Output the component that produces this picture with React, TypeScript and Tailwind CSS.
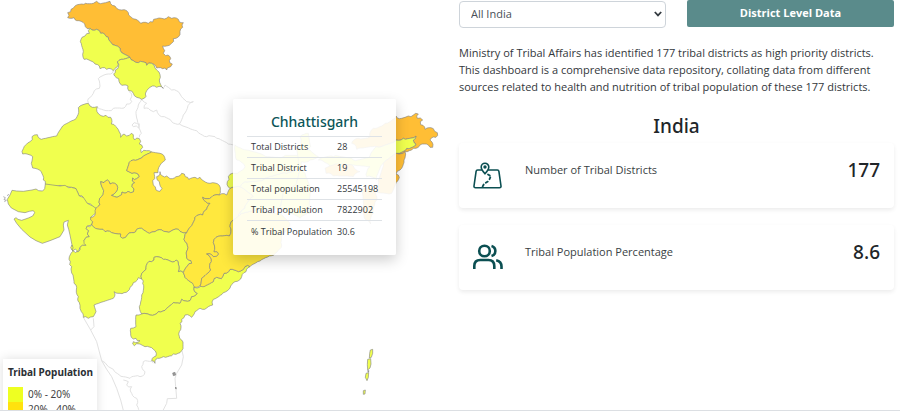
import React from "react";

type Point = [number, number];

const LIME = "#f0ff4e";
const YELLOW = "#ffe83e";
const ORANGE = "#ffbe35";

const parse = (source: string): Point[] =>
  source
    .trim()
    .split(/\s+/)
    .map((pair) => pair.split(",").map(Number) as Point);

// Breaks long borders into small irregular steps. The offsets depend only on
// an edge's two ends, so neighbouring states keep a common border.
function roughen(a: Point, b: Point): Point[] {
  const flip = a[0] > b[0] || (a[0] === b[0] && a[1] > b[1]);
  const [p, q] = flip ? [b, a] : [a, b];
  const dx = q[0] - p[0];
  const dy = q[1] - p[1];
  const length = Math.hypot(dx, dy);
  const steps = Math.floor(length / 6);
  const points: Point[] = [];
  for (let i = 1; i < steps; i++) {
    const wave = Math.sin(p[0] * 12.9 + p[1] * 78.2 + i * 37.7) * 4;
    const t = i / steps;
    points.push([
      Math.round(p[0] + dx * t - (dy / length) * wave),
      Math.round(p[1] + dy * t + (dx / length) * wave),
    ]);
  }
  return flip ? points.reverse() : points;
}

function border(source: string, closed: boolean, rough = true) {
  const points = parse(source);
  const out: Point[] = [];
  points.forEach((point, i) => {
    out.push(point);
    const next = points[i + 1] ?? (closed ? points[0] : undefined);
    if (next && rough) out.push(...roughen(point, next));
  });
  return "M" + out.map((p) => p.join(" ")).join("L") + (closed ? "Z" : "");
}

const states: { name: string; fill: string; shape: string; smooth?: boolean }[] = [
  {
    name: "Ladakh",
    fill: ORANGE,
    shape:
      "203,38 212,35 219,25 226,17 252,13 256,10 280,10 290,4 310,9 330,4 345,18 365,30 385,38 392,50 408,58 422,70 445,70 458,66 470,56 485,55 505,50 515,55 535,58 550,68 548,82 540,94 540,104 520,116 515,130 500,138 488,138 494,152 490,160 497,167 510,170 508,182 517,192 512,200 502,204 500,210 488,206 470,204 455,190 440,196 430,186 415,188 400,182 390,172 372,162 360,144 345,136 325,112 315,104 302,100 290,88 270,85 256,80 254,72 230,62 222,53 203,53",
  },
  {
    name: "Jammu and Kashmir",
    fill: LIME,
    shape:
      "270,85 290,88 302,100 315,104 325,112 345,136 360,144 372,162 390,172 370,178 352,186 352,200 340,212 320,208 300,206 285,192 252,178 250,155 241,125 246,112 255,108 268,100",
  },
  {
    name: "Himachal Pradesh",
    fill: LIME,
    shape:
      "352,186 370,178 390,172 400,182 415,188 430,186 440,196 455,190 465,204 470,210 480,224 478,240 490,265 470,262 450,262 436,282 434,294 425,298 410,292 400,280 386,272 384,258 366,256 356,236 341,222 346,210 354,205",
  },
  {
    name: "Rajasthan",
    fill: LIME,
    shape:
      "240,318 265,310 270,318 292,320 296,342 318,346 332,352 334,372 346,378 358,396 362,412 372,402 380,408 394,400 400,404 404,420 418,416 418,432 428,442 424,458 440,452 455,456 430,468 400,480 386,494 380,512 396,520 414,522 418,530 410,536 398,534 404,548 396,560 400,576 384,574 366,576 358,588 344,590 334,586 348,576 350,554 330,552 322,540 312,548 302,545 308,565 304,590 300,614 288,625 278,618 262,610 250,592 238,588 228,566 214,562 180,556 136,552 130,540 118,510 98,504 94,490 98,470 68,462 70,446 90,425 96,410 112,404 124,418 170,408 188,378 222,360 236,330",
  },
  {
    name: "Gujarat",
    fill: LIME,
    smooth: true,
    shape:
      "136,552 134,566 128,573 116,572 108,567 96,570 70,574 50,573 36,571 30,585 22,598 25,612 34,624 55,635 75,638 88,634 100,632 104,638 98,648 85,654 65,661 54,658 48,653 42,657 50,670 65,688 90,711 108,722 127,730 150,722 180,710 192,690 190,675 192,666 205,661 202,675 206,688 210,705 216,735 216,750 222,754 235,755 240,742 247,736 258,736 252,722 258,712 268,710 262,702 266,692 258,686 262,678 275,675 278,665 272,652 286,640 288,625 278,618 262,610 250,592 238,588 228,566 214,562 206,563 195,556 180,558 165,556",
  },
  {
    name: "Madhya Pradesh",
    fill: YELLOW,
    shape:
      "288,625 300,614 304,590 308,565 302,545 312,548 322,540 330,552 350,554 348,576 334,586 344,590 358,588 366,576 384,574 400,576 396,560 404,548 398,534 410,536 418,530 414,522 396,520 380,512 386,494 400,480 430,468 455,456 480,460 494,472 490,485 474,510 474,518 462,518 464,536 458,542 460,555 468,570 480,574 486,565 478,545 470,530 480,515 488,528 500,528 510,536 528,530 545,520 556,530 566,538 585,532 600,532 610,542 630,550 658,556 658,585 634,592 608,592 630,610 620,628 608,645 585,652 570,682 560,698 535,688 515,692 498,695 485,690 465,695 448,700 425,685 410,688 395,698 382,705 368,715 362,702 335,698 315,695 300,688 280,680 275,675 278,665 272,652 286,640",
  },
  {
    name: "Maharashtra",
    fill: LIME,
    shape:
      "216,735 216,750 222,754 235,755 240,742 247,736 258,736 252,722 258,712 268,710 262,702 266,692 258,686 262,678 275,675 280,680 300,688 315,695 335,698 362,702 368,715 382,705 395,698 410,688 425,685 448,700 465,695 485,690 498,695 515,692 535,688 560,698 555,725 562,750 565,780 575,790 562,798 550,818 535,815 535,792 528,780 510,783 490,778 462,772 455,785 442,790 438,808 430,815 425,837 415,833 400,848 390,862 372,878 342,875 340,895 310,905 282,915 288,935 280,950 265,955 257,950 250,952 244,935 240,925 238,908 235,890 229,870 222,850 219,825 215,800 211,785 208,770 213,760",
  },
  {
    name: "Telangana",
    fill: LIME,
    shape:
      "425,837 430,815 438,808 442,790 455,785 462,772 490,778 510,783 528,780 535,792 535,815 550,818 555,832 578,850 582,862 592,880 575,890 570,902 545,898 540,910 520,908 500,925 475,935 450,945 425,942 418,920 425,885 428,850",
  },
  {
    name: "Andhra Pradesh",
    fill: LIME,
    shape:
      "408,945 425,942 450,945 475,935 500,925 520,908 540,910 545,898 570,902 575,890 592,880 582,862 605,856 612,860 640,845 650,832 664,836 672,820 690,808 715,815 735,800 750,800 738,815 725,830 705,845 690,864 670,878 640,898 638,915 620,924 600,925 585,935 575,952 555,945 545,958 540,970 538,995 545,1020 545,1052 520,1062 490,1070 472,1075 465,1090 455,1082 468,1068 460,1048 435,1040 420,1032 403,1037 400,1025 420,1022 408,1015 394,1012 392,985 408,980",
  },
  {
    name: "Chhattisgarh",
    fill: YELLOW,
    shape:
      "608,592 634,592 658,585 680,585 690,565 720,560 760,590 735,625 715,650 700,660 690,680 688,708 648,712 640,728 642,755 656,762 640,770 620,762 634,785 632,810 605,835 600,858 582,860 578,850 555,832 550,818 562,798 575,790 565,780 562,750 555,725 560,698 570,682 585,652 608,645 620,628 630,610",
  },
  {
    name: "Odisha",
    fill: YELLOW,
    shape:
      "700,660 720,645 780,630 840,640 870,670 848,700 845,735 815,767 780,783 750,800 735,800 715,815 690,808 672,820 664,836 650,832 640,845 612,860 600,858 605,835 632,810 634,785 620,762 640,770 656,762 642,755 640,728 648,712 688,708 690,680",
  },
  {
    name: "Jharkhand",
    fill: LIME,
    shape: "720,560 735,545 790,540 860,520 900,510 890,550 850,570 840,620 780,630 720,645 735,625 760,590",
  },
  {
    name: "Bihar",
    fill: LIME,
    shape: "705,435 740,450 790,465 850,470 900,470 905,505 860,520 790,540 735,545 720,560 690,565 682,545 685,530 705,520 735,500 710,480",
  },
  {
    name: "West Bengal",
    fill: LIME,
    shape: "890,440 930,450 955,470 930,480 905,485 915,520 935,570 930,640 900,655 870,640 840,620 850,570 890,550 900,510",
  },
  { name: "Sikkim", fill: LIME, shape: "900,410 925,400 932,440 900,445" },
  {
    name: "Arunachal Pradesh",
    fill: ORANGE,
    shape:
      "1055,430 1075,415 1110,410 1120,385 1155,370 1188,348 1205,355 1215,352 1225,348 1240,345 1255,342 1252,355 1268,360 1262,374 1275,388 1300,386 1312,398 1308,412 1290,420 1298,442 1285,435 1260,435 1240,445 1215,455 1190,460 1220,445 1248,432 1240,420 1248,408 1210,415 1188,420 1130,440 1070,448",
  },
  {
    name: "Assam",
    fill: LIME,
    shape:
      "955,480 1000,470 1060,480 1110,468 1130,440 1188,420 1210,415 1248,408 1240,420 1248,432 1220,445 1190,460 1150,490 1130,540 1100,530 1110,500 1060,495 990,500",
  },
  { name: "Meghalaya", fill: ORANGE, shape: "975,505 1000,495 1060,498 1080,515 1060,530 1000,528 978,520" },
  {
    name: "Nagaland and Manipur",
    fill: ORANGE,
    shape: "1190,460 1215,455 1212,480 1200,510 1188,522 1198,532 1188,548 1175,580 1130,575 1135,540 1150,490",
  },
  { name: "Mizoram", fill: ORANGE, shape: "1085,565 1120,570 1130,600 1120,640 1112,672 1098,660 1090,620" },
  { name: "North Andaman", fill: LIME, smooth: true, shape: "1111,1050 1118,1048 1118,1060 1114,1072 1108,1074 1109,1060" },
  { name: "Middle Andaman", fill: LIME, smooth: true, shape: "1103,1078 1112,1076 1113,1092 1110,1104 1103,1110 1102,1094" },
  { name: "South Andaman", fill: LIME, smooth: true, shape: "1098,1120 1106,1118 1105,1132 1101,1142 1096,1132" },
  { name: "Little Andaman", fill: LIME, smooth: true, shape: "1090,1172 1096,1170 1095,1182 1090,1183" },
];

const faintBorders = [
  "340,212 325,222 295,236 298,265 280,280 265,296 265,308",
  "292,322 325,332 340,325 365,325 380,312 395,305 395,290 388,276",
  "425,298 415,315 408,335 412,360 418,372 420,390 424,400 418,412",
  "396,375 403,368 415,372 416,384 400,380 396,375",
  "425,298 440,310 432,325 450,330 460,335 470,330 485,350 515,365 538,372 550,345 562,325 580,305 555,300 540,282 515,270 495,255 488,265",
  "538,372 590,392 620,410 650,415 685,432 705,435",
  "340,1108 370,1130 390,1135 420,1130 435,1115 425,1100 430,1085 460,1088",
  "370,1140 385,1145 380,1155 395,1160 395,1180 410,1195 410,1215 417,1236",
];

const faintCoast = [
  "250,952 258,966 272,990 290,1025 305,1082 320,1108 335,1130 350,1165 362,1200 372,1239",
  "272,990 282,980 280,955",
  "305,1082 315,1088 325,1100 340,1108",
  "546,1052 550,1070 545,1095 530,1120 525,1135 527,1160 530,1195 502,1196 500,1210 485,1239",
];

function IndiaMap() {
  return (
    <svg viewBox="0 0 1350 1239" className="block w-full" role="img" aria-label="Map of India by tribal population">
      <g fill="none" stroke="#e2e2e2" strokeWidth="3">
        {faintBorders.map((line) => (
          <path key={line} d={border(line, false)} />
        ))}
        {faintCoast.map((line) => (
          <path key={line} d={border(line, false, false)} />
        ))}
      </g>
      <g stroke="#828282" strokeOpacity="0.62" strokeWidth="3" strokeLinejoin="round">
        {states.map((state) => (
          <path key={state.name} fill={state.fill} d={border(state.shape, true, !state.smooth)} />
        ))}
        <path fill="none" d="M10 590l6 3-4 6 8 2M13 605l5-3M22 588l4-6" />
        <path fill="#fff" d="M220 752l6-5 6 6-6 5z" />
        <path fill="#999" d="M518 1119l7-2 2 8-7 2zM525 1164l3-3 1 6z" />
        <path fill="#999" d="M1103 1112l4 0-2 5z" />
      </g>
    </svg>
  );
}

const districtRows = [
  ["Total Districts", "28"],
  ["Tribal District", "19"],
  ["Total population", "25545198"],
  ["Tribal population", "7822902"],
  ["% Tribal Population", "30.6"],
];

function StateTooltip() {
  return (
    <div className="absolute top-[99px] left-[233px] h-[156px] w-[163px] rounded-xs bg-white/90 px-[14px] pt-3 shadow-[0_5px_14px_rgba(0,0,0,0.2)]">
      <h2 className="h-[25px] text-center font-['Noto_Sans',sans-serif] text-sm leading-[22px] font-medium text-[#0b5558]">Chhattisgarh</h2>
      <table className="w-full border-collapse text-[9px] text-[#33373b]">
        <tbody>
          {districtRows.map(([label, value]) => (
            <tr key={label} className="h-[21px] border-t border-[#dee2e6]">
              <th scope="row" className="w-[90px] p-0 pl-1 text-left font-normal whitespace-nowrap">
                {label}
              </th>
              <td className="p-0">{value}</td>
            </tr>
          ))}
        </tbody>
      </table>
    </div>
  );
}

function Legend() {
  return (
    <div className="absolute top-[359px] left-[3px] w-[94px] bg-white px-[5px] pt-[5px] font-['Noto_Sans',sans-serif] shadow-[0_0_10px_rgba(0,0,0,0.13)]">
      <h3 className="text-[10px] leading-4 font-bold whitespace-nowrap text-[#2b3035]">Tribal Population</h3>
      <ul className="mt-[7px] text-[10px] leading-[15px] text-[#444]">
        <li className="flex items-center gap-[5px]">
          <span className="h-[15px] w-[15px] bg-[#eeff22]" />
          0% - 20%
        </li>
        <li className="flex items-center gap-[5px]">
          <span className="h-[15px] w-[15px] bg-[#ffe20e]" />
          20% - 40%
        </li>
        <li className="flex items-center gap-[5px]">
          <span className="h-[15px] w-[15px] bg-[#ffae03]" />
          40% - 60%
        </li>
      </ul>
    </div>
  );
}

function MapPinIcon() {
  return (
    <svg viewBox="0 0 29 27" className="h-[27px] w-[29px]" fill="none" stroke="#0b4f52" strokeWidth="1.6" strokeLinecap="round" strokeLinejoin="round" aria-hidden="true">
      <path d="M8.500 8H4.600Q3.300 8 3.100 9.300L1 24Q.8 25.800 2.500 25.800H26.500Q28.200 25.800 28 24L25.900 9.300Q25.700 8 24.400 8H15.500" />
      <path d="M12 11.800C9.500 9 8.200 7.200 8.200 5A3.800 3.800 0 0 1 15.800 5C15.800 7.200 14.500 9 12 11.800Z" />
      <circle cx="12" cy="5" r="0.900" />
      <path d="M15 12.500L16.800 13.600M17.300 15.300L16.500 17.200M14.800 19.600L12.800 20.800M10.700 22.500L9.600 24.700" strokeWidth="1.800" />
    </svg>
  );
}

function PeopleIcon() {
  return (
    <svg viewBox="0 0 30 26" className="h-[26px] w-[30px]" fill="none" stroke="#0b4f52" strokeWidth="2.600" strokeLinejoin="round" aria-hidden="true">
      <circle cx="11.500" cy="7" r="5.300" />
      <path d="M1.300 25V22Q1.300 16 7.300 16H15.300Q21.300 16 21.300 22V25" />
      <path d="M18.500 1.900A5.300 5.300 0 0 1 18.500 12.100M23.200 16.300Q28.500 17.500 28.500 22.500V25" />
    </svg>
  );
}

function StatCard({ icon, label, value }: { icon: React.ReactNode; label: string; value: string }) {
  return (
    <section className="flex h-[65px] rounded-sm bg-white px-[14px] pt-[14px] shadow-[0_2px_4px_rgba(0,0,0,0.08)]">
      <div className="flex w-[52px] shrink-0 items-start pt-[5px]">{icon}</div>
      <p className="grow text-[11px] leading-[26px] text-[#3a3f44]">{label}</p>
      <p className="font-['Noto_Sans',sans-serif] text-[19px] leading-[26px] font-medium text-[#212529]">{value}</p>
    </section>
  );
}

export default function App() {
  return (
    <main className="flex h-[calc(100vh-2px)] overflow-hidden border-b border-[#dcdfe3] bg-white font-['Open_Sans','Noto_Sans',sans-serif] text-[#212529]">
      <div className="relative w-1/2">
        <IndiaMap />
        <StateTooltip />
        <Legend />
      </div>
      <div className="w-1/2 pr-[6px] pl-[9px]">
        <div className="grid grid-cols-2 gap-[21px]">
          <div className="relative">
            <select
              aria-label="State"
              className="h-[27px] w-full appearance-none rounded-sm border border-[#ced4da] bg-white pr-6 pl-[11px] text-[11px] text-[#495057]"
            >
              <option>All India</option>
            </select>
            <svg viewBox="0 0 8 6" className="pointer-events-none absolute top-[11px] right-1 h-[6px] w-2" fill="none" stroke="#343a40" strokeWidth="1.800" aria-hidden="true">
              <path d="M0.800 1L4 4.400L7.200 1" />
            </svg>
          </div>
          <button type="button" className="h-[27px] rounded-xs bg-[#5a8b8b] text-[11px] font-bold text-white">
            District Level Data
          </button>
        </div>
        <p className="mt-4 text-[11px] leading-[17px] text-[#33373b]">
          Ministry of Tribal Affairs has identified 177 tribal districts as high priority districts. This dashboard is a comprehensive data
          repository, collating data from different sources related to health and nutrition of tribal population of these 177 districts.
        </p>
        <h1 className="mt-[18px] text-center font-['Noto_Sans',sans-serif] text-[19px] leading-[26px] font-medium">India</h1>
        <div className="mt-1 flex flex-col gap-[17px]">
          <StatCard icon={<MapPinIcon />} label="Number of Tribal Districts" value="177" />
          <StatCard icon={<PeopleIcon />} label="Tribal Population Percentage" value="8.6" />
        </div>
      </div>
    </main>
  );
}
